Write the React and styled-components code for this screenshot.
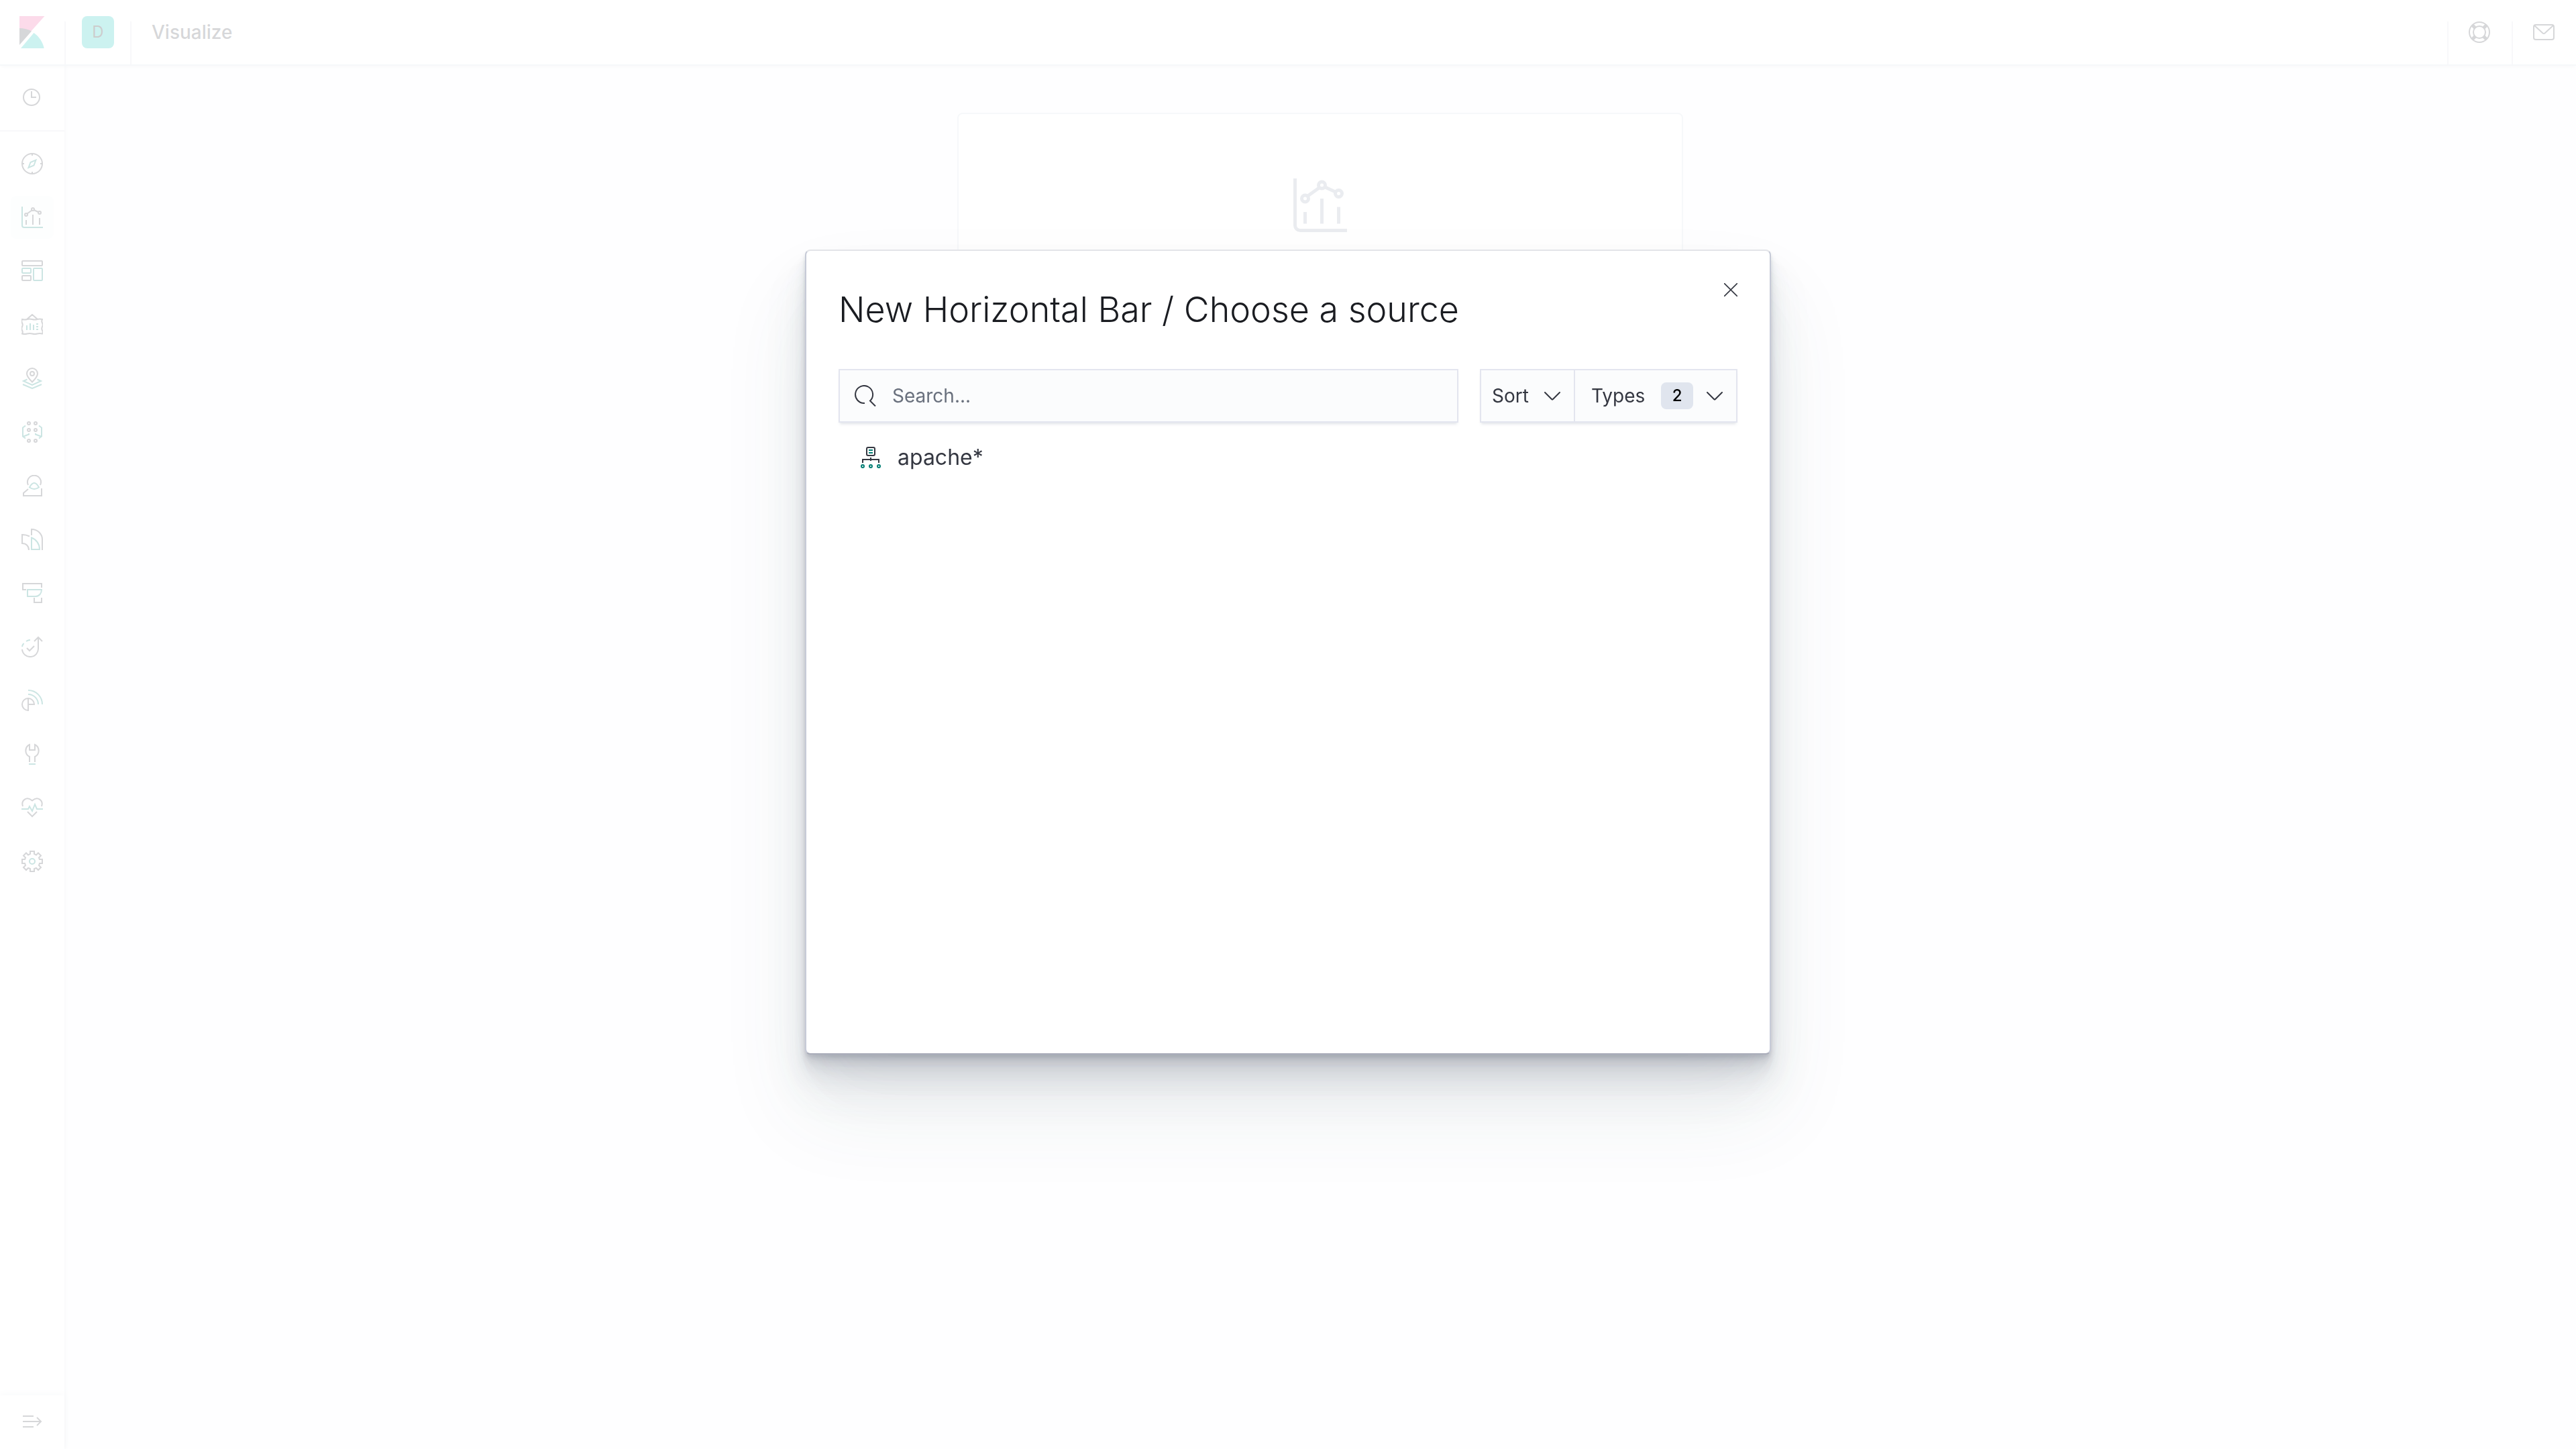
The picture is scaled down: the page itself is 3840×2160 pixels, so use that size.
import React from "react";
import styled, { createGlobalStyle } from "styled-components";

const GlobalStyle = createGlobalStyle`
  *, *::before, *::after { box-sizing: border-box; }
  body {
    margin: 0;
    background: #fafbfd;
    color: #343741;
    font-family: Inter, "Liberation Sans", sans-serif;
    font-size: 28px;
    line-height: 42px;
  }
  button, input { font: inherit; color: inherit; }
`;

const Page = styled.div`
  min-height: 100vh;
  display: grid;
  grid-template: 98px 1fr / 96px 1fr;
`;

const Header = styled.header`
  grid-column: 1 / -1;
  display: flex;
  background: #fff;
  border-bottom: 2px solid #d3dae6;
  box-shadow: 0 4px 4px -2px rgba(152, 162, 179, 0.3);
  z-index: 1;
`;

const divider = `
  background: linear-gradient(#d9dde6, #d9dde6) left bottom / 2px 64px no-repeat;
`;

const HeaderCell = styled.div`
  width: ${(p) => (p.$wide ? "98px" : "96px")};
  padding-left: ${(p) => (p.$wide ? "2px" : "0")};
  display: flex;
  align-items: center;
  justify-content: center;
  ${(p) => p.$divider && divider}
`;

const Breadcrumb = styled.h1`
  flex: 1;
  margin: 0;
  padding-left: 32px;
  display: flex;
  align-items: center;
  font-size: 28px;
  font-weight: 500;
  ${divider}
`;

const IconButton = styled.button`
  display: flex;
  align-items: center;
  justify-content: center;
  padding: 0;
  border: 0;
  background: none;
`;

const SpaceAvatar = styled(IconButton)`
  width: 48px;
  height: 48px;
  border-radius: 8px;
  background: #00bfb3;
  color: #000;
  font-size: 24px;
`;

const Nav = styled.nav`
  display: flex;
  flex-direction: column;
  background: #fff;
  box-shadow: 2px 0 4px rgba(152, 162, 179, 0.3);
`;

const RecentButton = styled(IconButton)`
  height: 98px;
  padding-right: 2px;
  border-bottom: 2px solid #d9dde6;
`;

const NavList = styled.ul`
  flex: 1;
  list-style: none;
  margin: 0;
  padding: 16px;
  display: flex;
  flex-direction: column;
  gap: 16px;
`;

const NavLink = styled.a`
  display: flex;
  align-items: center;
  justify-content: center;
  height: 64px;
  border-radius: 8px;
  color: #343741;
  background: ${(p) => (p.$active ? "#f5f7fa" : "none")};
`;

const ExpandButton = styled(IconButton)`
  height: 80px;
  box-shadow: 0 -2px 10px rgba(152, 162, 179, 0.3);
`;

const Main = styled.main`
  padding: 70px 32px;
  display: flex;
  justify-content: center;
  align-items: flex-start;
`;

const EmptyPanel = styled.section`
  width: 1082px;
  min-height: 800px;
  padding: 96px;
  display: flex;
  justify-content: center;
  align-items: flex-start;
  background: #fff;
  border: 2px solid #d3dae6;
  border-radius: 8px;
  color: #98a2b3;
`;

const Overlay = styled.div`
  position: fixed;
  inset: 0;
  z-index: 2;
  display: flex;
  align-items: center;
  justify-content: center;
  padding-bottom: 10vh;
  background: rgba(255, 255, 255, 0.8);
`;

const Modal = styled.section`
  position: relative;
  width: 1440px;
  min-height: 1200px;
  padding: 48px;
  background: #fff;
  border: 2px solid #c6cad7;
  border-top-color: #e3e4e8;
  border-bottom-color: #aaadba;
  border-radius: 8px;
  box-shadow: 0 80px 128px rgba(65, 78, 101, 0.1),
    0 48px 64px rgba(65, 78, 101, 0.1), 0 32px 32px rgba(65, 78, 101, 0.1),
    0 16px 16px rgba(65, 78, 101, 0.1), 0 8px 8px rgba(65, 78, 101, 0.1),
    0 4px 4px rgba(65, 78, 101, 0.1);
`;

const ModalTitle = styled.h2`
  margin: 0 0 48px;
  font-size: 52px;
  line-height: 80px;
  font-weight: 300;
  color: #1a1c21;
`;

const CloseButton = styled(IconButton)`
  position: absolute;
  top: 34px;
  right: 34px;
  width: 48px;
  height: 48px;
`;

const Toolbar = styled.div`
  display: flex;
  gap: 32px;
`;

const control = `
  height: 80px;
  background: #fbfcfd;
  border: 2px solid #e3e5ef;
  box-shadow: 0 4px 4px -2px rgba(152, 162, 179, 0.3);
`;

const SearchBox = styled.label`
  ${control}
  flex: 1;
  display: flex;
  align-items: center;
  gap: 24px;
  padding: 0 22px;
`;

const SearchInput = styled.input`
  flex: 1;
  min-width: 0;
  padding: 0;
  border: 0;
  outline: 0;
  background: none;
  &::placeholder { color: #69707d; opacity: 1; }
`;

const FilterGroup = styled.div`
  ${control}
  display: flex;
`;

const FilterButton = styled.button`
  display: flex;
  align-items: center;
  justify-content: space-between;
  width: ${(p) => (p.$wide ? "242px" : "138px")};
  padding: ${(p) => (p.$wide ? "0 20px 0 24px" : "0 20px 0 16px")};
  border: 0;
  border-left: ${(p) => (p.$wide ? "2px solid #e3e5ef" : "0")};
  background: none;
`;

const Badge = styled.span`
  width: 48px;
  margin-left: 4px;
  border-radius: 8px;
  background: #e0e5ee;
  color: #000;
  font-size: 24px;
  line-height: 40px;
  font-weight: 500;
  text-align: center;
`;

const SourceList = styled.ul`
  list-style: none;
  margin: 0;
  padding: 28px 32px;
`;

const SourceButton = styled.button`
  display: flex;
  align-items: center;
  gap: 24px;
  padding: 0;
  border: 0;
  background: none;
  font-size: 32px;
  line-height: 48px;
`;

const Svg = styled.svg`
  display: block;
  flex: none;
  fill: none;
  stroke: currentColor;
  stroke-width: 2;
  .accent { stroke: #017d73; }
`;

const Logo = styled(Svg)`
  stroke: none;
`;

const Icon = ({ size = 32, children }) => (
  <Svg width={size} height={size} viewBox="0 0 32 32" aria-hidden="true">
    {children}
  </Svg>
);

const KibanaLogo = () => (
  <Logo width="38" height="48" viewBox="0 0 38 48" aria-hidden="true">
    <path fill="#f04e98" d="M0 0v42L37.500 0z" />
    <path fill="#343741" d="M0 18v25l18-20.500C12.600 19.600 6.500 18 0 18z" />
    <path fill="#00bfb3" d="M21.500 25L2 48h34.700C34.700 38.500 29.300 30.400 21.500 25z" />
  </Logo>
);

const VisualizeShapes = ({ accent }) => (
  <>
    <path className={accent ? "accent" : undefined} d="M1 0v28a3 3 0 0 0 3 3h28" />
    <path d="M7 20v7M17 12v15M27 17v10M8.500 10.500l7-5M18.500 5l6.500 3" />
    <circle cx="7" cy="12" r="2" />
    <circle cx="17" cy="4" r="2" />
    <circle cx="27" cy="9" r="2" />
  </>
);

const navItems = [
  ["Discover", <>
    <circle cx="16" cy="16" r="15" />
    <path d="M16 0v4M16 28v4M0 16h4M28 16h4" />
    <path className="accent" d="M21.500 10.500l-3 8-8 3.500 3-8z" />
  </>],
  ["Visualize", <VisualizeShapes accent />],
  ["Dashboard", <>
    <rect x="1" y="1" width="30" height="7" rx="1" />
    <rect x="1" y="23" width="13" height="7" rx="1" />
    <rect className="accent" x="1" y="12" width="13" height="7" rx="1" />
    <rect className="accent" x="18" y="12" width="13" height="18" rx="1" />
  </>],
  ["Canvas", <>
    <path d="M8 8l8-7 8 7M1 8q4 1 7.500 0t7.500 0 7.500 0 7.500 0q-1.500 3 0 5.500t0 5.500 0 5.500 0 5q-4-1-7.500 0t-7.500 0-7.500 0-7.500 0q1.500-2.500 0-5t0-5.500 0-5.500 0-5.500z" />
    <path className="accent" d="M8 17v7M13 14v10M18 16v8M22 15h3M22 19h3M22 23h3" />
  </>],
  ["Maps", <>
    <path d="M16 21.500C10.500 16 8 13 8 9a8 8 0 0 1 16 0c0 4-2.500 7-8 12.500z" />
    <circle cx="16" cy="9" r="3" />
    <path className="accent" d="M8.500 17.500L3 20l13 6 13-6-5.500-2.500M2 25l14 6 14-6" />
  </>],
  ["Machine Learning", <>
    <circle cx="11" cy="3" r="2" /><circle cx="21" cy="3" r="2" />
    <circle cx="11" cy="13" r="2" /><circle cx="21" cy="13" r="2" />
    <circle cx="11" cy="29" r="2" /><circle cx="21" cy="29" r="2" />
    <path className="accent" d="M6 6.500L2 9.500v13l4 3M26 6.500l4 3v13l-4 3M3 22.500l8-3v-1.500M29 22.500l-8-3v-1.500" />
  </>],
  ["Infrastructure", <>
    <path d="M10 15a10 10 0 1 1 18 0M30 20v11H3v-4l7-6" />
    <path className="accent" d="M12 18.500q7-13 14 0-7 5-14 0z" />
  </>],
  ["Logs", <>
    <path d="M12 11.500C9 10 5 9 1 9v13c6 0 10 4 10 10M15 10V1c9 0 16 7 16 15v16" />
    <path className="accent" d="M15 13.500V31h12c0-8-5-15-12-17.500z" />
  </>],
  ["APM", <>
    <path d="M7 11H2V2h28v6M19 23v7h11v-7" />
    <path className="accent" d="M9 11h21c0 6-4 10-9 10H9z" />
  </>],
  ["Uptime", <>
    <path d="M1 20a12 12 0 0 0 24-2V2M19 8l6-6 6 6M8 18l4 4 7-7" />
    <path className="accent" d="M1 16q.5-3 2.500-5M7 8q3-2 6-2" />
  </>],
  ["SIEM", <>
    <path d="M10 13a9 9 0 0 0 0 18zM10 13a9 9 0 0 1 9 9h-9" />
    <path className="accent" d="M10 7a15 15 0 0 1 15 15M10 1a21 21 0 0 1 21 21" />
  </>],
  ["Dev Tools", <>
    <path d="M12 28v-8A10 10 0 0 1 12 2v8h8V2a10 10 0 0 1 0 18v8" />
    <path className="accent" d="M11 31h10" />
  </>],
  ["Stack Monitoring", <>
    <path d="M2 14C-1 5 8-2 16 5.500 24-2 33 5 30 14M9 22l7 7 7-7" />
    <path className="accent" d="M0 18h10l2-4 4 7 4-10 3 7h9" />
  </>],
  ["Management", <>
    <path d="M13 5V1h6v4l3 1.500 3-3 4 4-3 3 1 2.500h4v6h-4l-1 3 3 3-4 4-3-3-3 1v4h-6v-4l-3-1-3 3-4-4 3-3-1-3H1v-6h4l1-2.500-3-3 4-4 3 3z" />
    <circle className="accent" cx="16" cy="16" r="4" />
  </>],
];

const Chevron = () => (
  <Svg width="24" height="14" viewBox="0 0 24 14" aria-hidden="true">
    <path strokeLinecap="round" strokeLinejoin="round" d="M1 2l10 10q1 1 2 0L23 2" />
  </Svg>
);

export default function App() {
  return (
    <>
      <GlobalStyle />
      <Page>
        <Header>
          <HeaderCell><KibanaLogo /></HeaderCell>
          <HeaderCell $wide $divider><SpaceAvatar>D</SpaceAvatar></HeaderCell>
          <Breadcrumb>Visualize</Breadcrumb>
          <HeaderCell $divider>
            <IconButton aria-label="Help">
              <Icon>
                <circle cx="16" cy="16" r="15" /><circle cx="16" cy="16" r="9" />
                <path strokeWidth="5" d="M5.500 5.500l4 4M26.500 5.500l-4 4M5.500 26.500l4-4M26.500 26.500l-4-4" />
              </Icon>
            </IconButton>
          </HeaderCell>
          <HeaderCell $divider>
            <IconButton aria-label="Newsfeed">
              <Icon>
                <rect x="1" y="5" width="30" height="22" rx="3" />
                <path d="M2 6l12.500 11.500q1.500 1 3 0L30 6" />
              </Icon>
            </IconButton>
          </HeaderCell>
        </Header>
        <Nav aria-label="Main">
          <RecentButton aria-label="Recently viewed">
            <Icon><circle cx="16" cy="15" r="12" /><path d="M16 6v9h7" /></Icon>
          </RecentButton>
          <NavList>
            {navItems.map(([name, shapes]) => (
              <li key={name}>
                <NavLink href="#" aria-label={name} $active={name === "Visualize"}>
                  <Icon>{shapes}</Icon>
                </NavLink>
              </li>
            ))}
          </NavList>
          <ExpandButton aria-label="Expand navigation">
            <Icon><path d="M2 7h16M2 15h27M2 23h16M23 9l6 6-6 6" /></Icon>
          </ExpandButton>
        </Nav>
        <Main>
          <EmptyPanel>
            <Icon size={80}><VisualizeShapes /></Icon>
          </EmptyPanel>
        </Main>
      </Page>
      <Overlay>
        <Modal role="dialog" aria-labelledby="modal-title">
          <CloseButton aria-label="Close">
            <Svg width="20" height="20" viewBox="0 0 20 20" aria-hidden="true">
              <path strokeWidth="1.6" d="M0 0l20 20M20 0L0 20" />
            </Svg>
          </CloseButton>
          <ModalTitle id="modal-title">New Horizontal Bar / Choose a source</ModalTitle>
          <Toolbar>
            <SearchBox>
              <Icon>
                <path d="M15 27A13 13 0 1 1 23 23.500l8 8" />
              </Icon>
              <SearchInput type="search" placeholder="Search..." aria-label="Search" />
            </SearchBox>
            <FilterGroup>
              <FilterButton>Sort<Chevron /></FilterButton>
              <FilterButton $wide>Types<Badge>2</Badge><Chevron /></FilterButton>
            </FilterGroup>
          </Toolbar>
          <SourceList>
            <li>
              <SourceButton>
                <Icon>
                  <rect x="10" y="1" width="12" height="12" rx="2" />
                  <path d="M16 16v5M4 24v-5h24v5" />
                  <path className="accent" d="M13 5h6M13 9h6" />
                  <circle className="accent" cx="4" cy="29" r="2" />
                  <circle className="accent" cx="16" cy="29" r="2" />
                  <circle className="accent" cx="28" cy="29" r="2" />
                </Icon>
                apache*
              </SourceButton>
            </li>
          </SourceList>
        </Modal>
      </Overlay>
    </>
  );
}
